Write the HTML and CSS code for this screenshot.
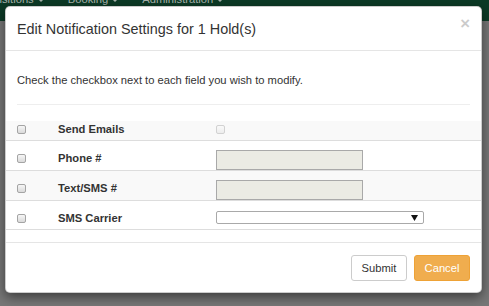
FILE: index.html
```html
<!DOCTYPE html>
<html>
<head>
    <title>Edit Notification Settings</title>
    <link rel="stylesheet" href="styles.css">
</head>
<body>
    <div class="navbar">
        <ul class="nav">
            <li>Acquisitions <span class="caret"></span></li>
            <li>Booking <span class="caret"></span></li>
            <li>Administration <span class="caret"></span></li>
        </ul>
    </div>

    <div class="modal">
        <div class="modal-header">
            <h4 class="modal-title">Edit Notification Settings for 1 Hold(s)</h4>
            <span class="close">&times;</span>
        </div>
        <div class="modal-body">
            <p>Check the checkbox next to each field you wish to modify.</p>
            <hr>
            <div class="table">
                <div class="row striped row-first">
                    <div class="cell"><span class="check"></span></div>
                    <div class="cell label">Send Emails</div>
                    <div class="cell"><span class="check disabled"></span></div>
                </div>
                <div class="row">
                    <div class="cell"><span class="check"></span></div>
                    <div class="cell label">Phone #</div>
                    <div class="cell"><div class="input"></div></div>
                </div>
                <div class="row striped">
                    <div class="cell"><span class="check"></span></div>
                    <div class="cell label">Text/SMS #</div>
                    <div class="cell"><div class="input"></div></div>
                </div>
                <div class="row row-last">
                    <div class="cell"><span class="check"></span></div>
                    <div class="cell label">SMS Carrier</div>
                    <div class="cell">
                        <div class="select">
                            <svg width="7" height="6" viewBox="0 0 7 6"><path d="M0 0 H7 L3.5 6 Z" fill="#111"/></svg>
                        </div>
                    </div>
                </div>
            </div>
        </div>
        <div class="modal-footer">
            <button class="btn btn-default">Submit</button>
            <button class="btn btn-warning">Cancel</button>
        </div>
    </div>
</body>
</html>
```

FILE: styles.css
```css
body { margin: 0; height: 306px; overflow: hidden; background: #777; font-family: "Liberation Sans", Arial, sans-serif; font-size: 11.2px; color: #333; }

/* page behind the backdrop */
.navbar { height: 21px; background: #0c3a26; overflow: hidden; }
.nav { display: flex; margin: -9px 0 0 -38px; padding: 0; list-style: none; }
.nav li { padding: 0 12px; line-height: 16px; color: #a8b2ad; white-space: nowrap; }
.caret { display: inline-block; width: 0; height: 0; margin-left: 1px; vertical-align: middle; border-top: 3px solid; border-left: 3px solid transparent; border-right: 3px solid transparent; }

/* dialog */
.modal { position: absolute; top: 6px; left: 5px; width: 477px; box-sizing: border-box; background: #fff; border: 1px solid rgba(0, 0, 0, .2); border-radius: 5px; box-shadow: 0 4px 12px rgba(0, 0, 0, .5); }
.modal-header { display: flex; justify-content: space-between; align-items: flex-start; padding: 12px 11px 11px; border-bottom: 1px solid #e5e5e5; }
.modal-title { margin: 0; font-size: 14.4px; line-height: 20px; font-weight: normal; color: #333; }
.close { margin-top: -3px; font-size: 16.8px; font-weight: bold; line-height: 1; color: #000; opacity: .2; }
.modal-body { padding: 21px 11px 12px; }
.modal-body p { margin: 0 0 8px; line-height: 16px; }
.modal-body hr { height: 0; margin: 16px 0; border: 0; border-top: 1px solid #eee; }

.table { margin: 0 -11px; }
.row { display: grid; grid-template-columns: 41px 158px 1fr; align-items: start; box-sizing: border-box; height: 30px; padding-top: 9px; border-bottom: 1px solid #ddd; }
.row-first { height: 20px; padding-top: 0; }
.row-last { height: 29px; }
.striped { background: #f9f9f9; }
.cell { padding-left: 11px; line-height: 16px; }
.label { font-weight: bold; }

.check { display: block; width: 9px; height: 9px; margin-top: 4px; box-sizing: border-box; border: 1px solid #a4a4a4; border-radius: 2px; background: linear-gradient(#f6f6f6, #dadada); }
.check.disabled { border-color: #d2d2d2; background: linear-gradient(#fafafa, #ededed); }
.input { width: 147px; height: 20px; box-sizing: border-box; border: 1px solid #a9a9a9; background: #ebebe4; }
.select { display: flex; justify-content: flex-end; align-items: center; width: 208px; height: 13px; margin-top: 1px; padding-right: 5px; box-sizing: border-box; border: 1px solid #a9a9a9; border-radius: 2px; background: #fff; }

.modal-footer { display: flex; justify-content: flex-end; gap: 7px; padding: 12px 11px 11px; border-top: 1px solid #e5e5e5; }
.btn { font-family: inherit; font-size: 11.2px; line-height: 16px; padding: 4px 9.6px; border: 1px solid; border-radius: 3px; cursor: pointer; }
.btn-default { background: #fff; border-color: #ccc; color: #333; }
.btn-warning { background: #f0ad4e; border-color: #eea236; color: #fff; }
```
